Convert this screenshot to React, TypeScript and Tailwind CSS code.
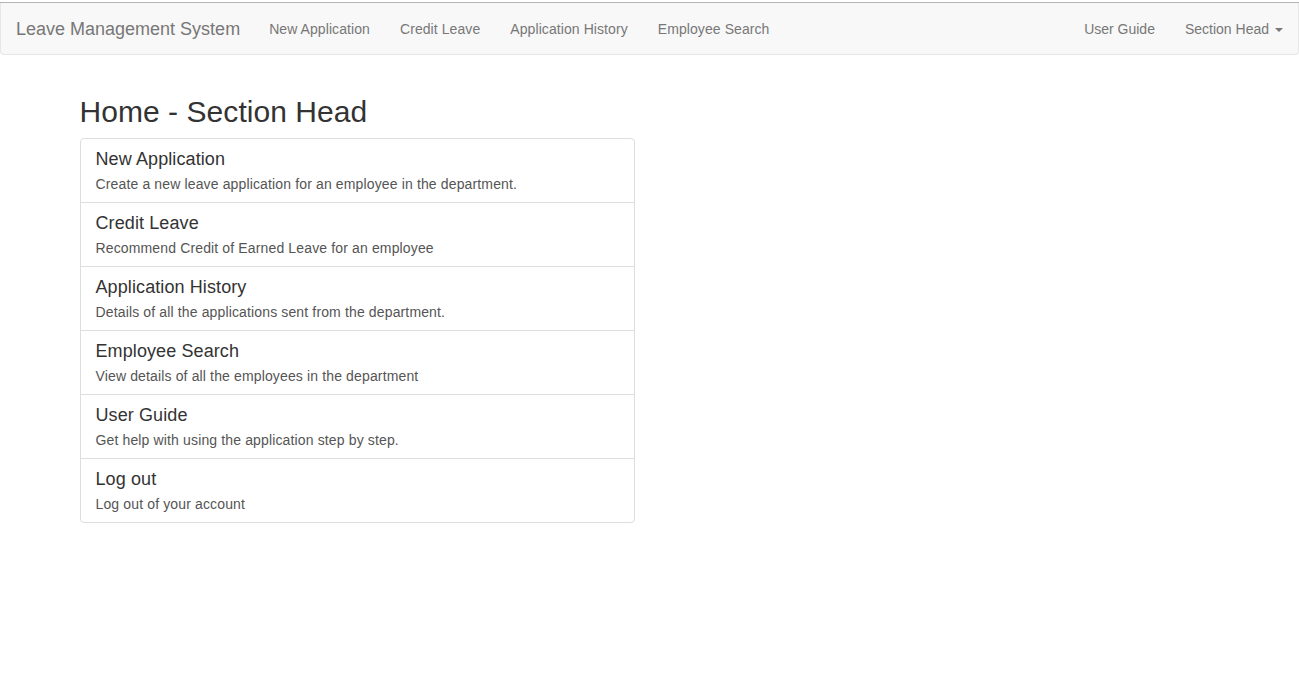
const items = [
  { title: "New Application", text: "Create a new leave application for an employee in the department." },
  { title: "Credit Leave", text: "Recommend Credit of Earned Leave for an employee" },
  { title: "Application History", text: "Details of all the applications sent from the department." },
  { title: "Employee Search", text: "View details of all the employees in the department" },
  { title: "User Guide", text: "Get help with using the application step by step." },
  { title: "Log out", text: "Log out of your account" },
];

const navLinks = ["New Application", "Credit Leave", "Application History", "Employee Search"];

export default function App() {
  return (
    <div className="min-h-screen bg-white pt-[2px] text-[14px] leading-[20px] text-[#333]" style={{ fontFamily: '"Liberation Sans", Arial, sans-serif' }}>
      <div className="h-px bg-[#b4b4b4]" />
      <nav className="flex h-[52px] items-stretch rounded-b-[4px] border border-t-0 border-[#e7e7e7] bg-[#f8f8f8] pt-px">
        <a className="flex items-center pl-[15px] pr-[14px] text-[18px] text-[#777]">Leave Management System</a>
        <ul className="flex">
          {navLinks.map((l) => (
            <li key={l}>
              <a className="flex h-full items-center px-[15px] tracking-[0.08px] text-[#777]">{l}</a>
            </li>
          ))}
        </ul>
        <ul className="ml-auto flex">
          <li>
            <a className="flex h-full items-center px-[15px] text-[#777]">User Guide</a>
          </li>
          <li>
            <a className="flex h-full items-center px-[15px] text-[#777]">
              Section Head
              <span className="ml-[6px] mt-[2px] h-0 w-0 border-x-[4px] border-t-[4px] border-x-transparent border-t-[#777]" />
            </a>
          </li>
        </ul>
      </nav>
      <div className="mx-auto w-[1170px] px-[15px] pt-[40px]">
        <h2 className="mb-[10px] text-[30px] leading-[33px] font-normal tracking-[0.05px] text-[#333]">Home - Section Head</h2>
        <div className="w-[555px]">
          {items.map((it, i) => (
            <a
              key={it.title}
              className={
                "block border border-[#ddd] px-[15px] pt-[10px] pb-[8px] " +
                (i === 0 ? "rounded-t-[4px] " : "-mt-px ") +
                (i === items.length - 1 ? "rounded-b-[4px]" : "")
              }
            >
              <h4 className="mb-[5px] text-[18px] leading-[20px] font-normal tracking-[0.1px] text-[#333]">{it.title}</h4>
              <p className="text-[14px] leading-[20px] tracking-[0.14px] text-[#555]">{it.text}</p>
            </a>
          ))}
        </div>
      </div>
    </div>
  );
}
